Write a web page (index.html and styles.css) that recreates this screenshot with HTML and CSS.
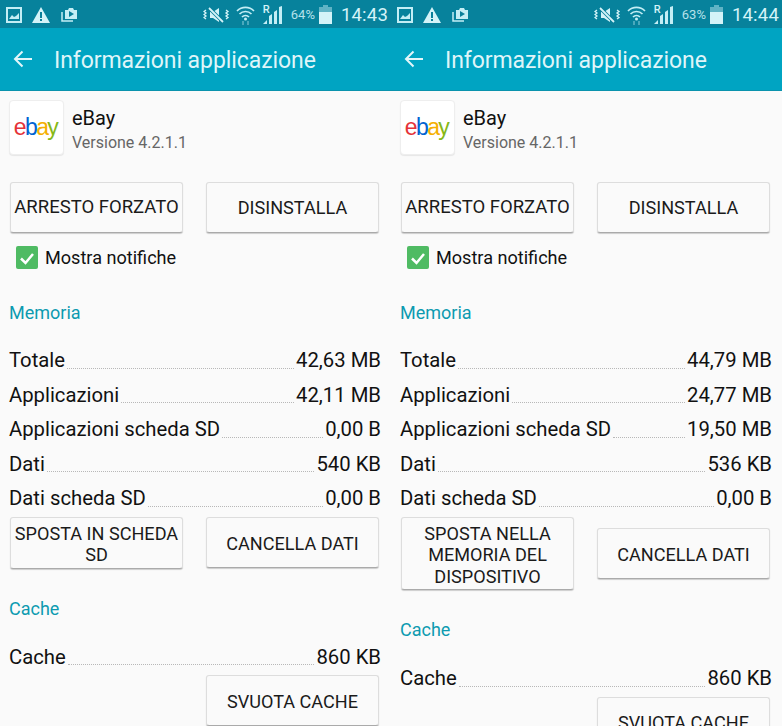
FILE: index.html
```html
<!DOCTYPE html>
<html lang="it">
<head>
<meta charset="utf-8">
<title>Informazioni applicazione</title>
<link rel="stylesheet" href="styles.css">
</head>
<body>
<div class="screens">
  <section class="phone">
    <header class="status">
      <svg class="ico" width="16" height="16" viewBox="0 0 16 16"><path d="M1 1h14v14H1z" fill="none" stroke="#c4eef5" stroke-width="2"/><path d="M3 12l3-4 2 2 2-1 3-3v6z" fill="#c4eef5"/></svg>
      <svg class="ico warn" width="18" height="16" viewBox="0 0 18 16"><path d="M9 0l9 16H0z" fill="#d4f3f8"/><path d="M8 5h2v6H8zM8 12h2v2H8z" fill="#0a7f99"/></svg>
      <svg class="ico shot" width="17" height="15" viewBox="0 0 17 15"><path d="M1 5v9h11" fill="none" stroke="#c4eef5" stroke-width="1.500"/><path d="M4 3h3l1-2h4l1 2h3v9H4z" fill="#c4eef5"/><path d="M8 4l5 3-5 3z" fill="#0a7f99"/></svg>
      <span class="spacer"></span>
      <svg class="ico mute" width="27" height="16" viewBox="0 0 27 16"><path d="M7 5h3l6-4v14l-6-4H7z" fill="#d4f3f8"/><path d="M6 1l14 14" stroke="#0a7f99" stroke-width="3.500"/><path d="M6 1l14 14" stroke="#d4f3f8" stroke-width="1.800"/><path d="M3 3l-2 1.500 2 1.500-2 1.500 2 1.500-2 1.500 2 1.500M23 3l2 1.500-2 1.500 2 1.500-2 1.500 2 1.500-2 1.500" fill="none" stroke="#d4f3f8" stroke-width="1.300"/></svg>
      <svg class="ico wifi" width="19" height="20" viewBox="0 0 19 20"><path d="M1 6a12 12 0 0 1 17 0M3.500 9a8.500 8.500 0 0 1 12 0M6 12a5 5 0 0 1 7 0" fill="none" stroke="#c4eef5" stroke-width="1.700"/><circle cx="9.500" cy="14" r="1.500" fill="#c4eef5"/><path d="M7 16v4M12 16v4" stroke="#62b5c6" stroke-width="1.500"/></svg>
      <span class="net"><span class="roam">R</span><svg width="19" height="18" viewBox="0 0 19 18"><path d="M0 18l4-4v4zM6 18v-8l3-2v10zM11 18V6l3-2v14zM16 18V1l3-1v18z" fill="#c4eef5"/></svg></span>
      <span class="pct">64%</span>
      <svg class="ico batt" width="13" height="19" viewBox="0 0 13 19"><path d="M4 0h5v2h4v17H0V2h4z" fill="#5fb3c5"/><path d="M0 7h13v12H0z" fill="#d4f3f8"/></svg>
      <span class="clock">14:43</span>
    </header>
    <div class="bar">
      <svg class="back" width="20" height="18" viewBox="0 0 20 18"><path d="M19 9H2M9.500 1.500L2 9l7.500 7.500" fill="none" stroke="#e3f6fa" stroke-width="2"/></svg>
      <h1 class="bar-title">Informazioni applicazione</h1>
    </div>
    <main class="content">
      <div class="app">
        <div class="app-icon"><span class="logo"><span class="l-e">e</span><span class="l-b">b</span><span class="l-a">a</span><span class="l-y">y</span></span></div>
        <div class="app-text">
          <div class="app-name">eBay</div>
          <div class="app-ver">Versione 4.2.1.1</div>
        </div>
      </div>
      <div class="btns top-btns">
        <button class="btn tight">ARRESTO FORZATO</button>
        <button class="btn">DISINSTALLA</button>
      </div>
      <label class="notify"><span class="check"><svg width="22" height="22" viewBox="0 0 22 22"><path d="M5 11.500l4.500 4.500L17 7" fill="none" stroke="#fff" stroke-width="2.500"/></svg></span>Mostra notifiche</label>
      <h2 class="section mem">Memoria</h2>
      <div class="rows">
        <div class="row"><span>Totale</span><i class="dots"></i><span>42,63 MB</span></div>
        <div class="row"><span>Applicazioni</span><i class="dots"></i><span>42,11 MB</span></div>
        <div class="row"><span>Applicazioni scheda SD</span><i class="dots"></i><span>0,00 B</span></div>
        <div class="row"><span>Dati</span><i class="dots"></i><span>540 KB</span></div>
        <div class="row"><span>Dati scheda SD</span><i class="dots"></i><span>0,00 B</span></div>
      </div>
      <div class="btns mid-btns">
        <button class="btn multi">SPOSTA IN SCHEDA SD</button>
        <button class="btn">CANCELLA DATI</button>
      </div>
      <h2 class="section cache">Cache</h2>
      <div class="row cache-row"><span>Cache</span><i class="dots"></i><span>860 KB</span></div>
      <div class="btns end-btns"><button class="btn">SVUOTA CACHE</button></div>
    </main>
  </section>
  <section class="phone">
    <header class="status">
      <svg class="ico" width="16" height="16" viewBox="0 0 16 16"><path d="M1 1h14v14H1z" fill="none" stroke="#c4eef5" stroke-width="2"/><path d="M3 12l3-4 2 2 2-1 3-3v6z" fill="#c4eef5"/></svg>
      <svg class="ico warn" width="18" height="16" viewBox="0 0 18 16"><path d="M9 0l9 16H0z" fill="#d4f3f8"/><path d="M8 5h2v6H8zM8 12h2v2H8z" fill="#0a7f99"/></svg>
      <svg class="ico shot" width="17" height="15" viewBox="0 0 17 15"><path d="M1 5v9h11" fill="none" stroke="#c4eef5" stroke-width="1.500"/><path d="M4 3h3l1-2h4l1 2h3v9H4z" fill="#c4eef5"/><path d="M8 4l5 3-5 3z" fill="#0a7f99"/></svg>
      <span class="spacer"></span>
      <svg class="ico mute" width="27" height="16" viewBox="0 0 27 16"><path d="M7 5h3l6-4v14l-6-4H7z" fill="#d4f3f8"/><path d="M6 1l14 14" stroke="#0a7f99" stroke-width="3.500"/><path d="M6 1l14 14" stroke="#d4f3f8" stroke-width="1.800"/><path d="M3 3l-2 1.500 2 1.500-2 1.500 2 1.500-2 1.500 2 1.500M23 3l2 1.500-2 1.500 2 1.500-2 1.500 2 1.500-2 1.500" fill="none" stroke="#d4f3f8" stroke-width="1.300"/></svg>
      <svg class="ico wifi" width="19" height="20" viewBox="0 0 19 20"><path d="M1 6a12 12 0 0 1 17 0M3.500 9a8.500 8.500 0 0 1 12 0M6 12a5 5 0 0 1 7 0" fill="none" stroke="#c4eef5" stroke-width="1.700"/><circle cx="9.500" cy="14" r="1.500" fill="#c4eef5"/><path d="M7 16v4M12 16v4" stroke="#62b5c6" stroke-width="1.500"/></svg>
      <span class="net"><span class="roam">R</span><svg width="19" height="18" viewBox="0 0 19 18"><path d="M0 18l4-4v4zM6 18v-8l3-2v10zM11 18V6l3-2v14zM16 18V1l3-1v18z" fill="#c4eef5"/></svg></span>
      <span class="pct">63%</span>
      <svg class="ico batt" width="13" height="19" viewBox="0 0 13 19"><path d="M4 0h5v2h4v17H0V2h4z" fill="#5fb3c5"/><path d="M0 7h13v12H0z" fill="#d4f3f8"/></svg>
      <span class="clock">14:44</span>
    </header>
    <div class="bar">
      <svg class="back" width="20" height="18" viewBox="0 0 20 18"><path d="M19 9H2M9.500 1.500L2 9l7.500 7.500" fill="none" stroke="#e3f6fa" stroke-width="2"/></svg>
      <h1 class="bar-title">Informazioni applicazione</h1>
    </div>
    <main class="content">
      <div class="app">
        <div class="app-icon"><span class="logo"><span class="l-e">e</span><span class="l-b">b</span><span class="l-a">a</span><span class="l-y">y</span></span></div>
        <div class="app-text">
          <div class="app-name">eBay</div>
          <div class="app-ver">Versione 4.2.1.1</div>
        </div>
      </div>
      <div class="btns top-btns">
        <button class="btn tight">ARRESTO FORZATO</button>
        <button class="btn">DISINSTALLA</button>
      </div>
      <label class="notify"><span class="check"><svg width="22" height="22" viewBox="0 0 22 22"><path d="M5 11.500l4.500 4.500L17 7" fill="none" stroke="#fff" stroke-width="2.500"/></svg></span>Mostra notifiche</label>
      <h2 class="section mem">Memoria</h2>
      <div class="rows">
        <div class="row"><span>Totale</span><i class="dots"></i><span>44,79 MB</span></div>
        <div class="row"><span>Applicazioni</span><i class="dots"></i><span>24,77 MB</span></div>
        <div class="row"><span>Applicazioni scheda SD</span><i class="dots"></i><span>19,50 MB</span></div>
        <div class="row"><span>Dati</span><i class="dots"></i><span>536 KB</span></div>
        <div class="row"><span>Dati scheda SD</span><i class="dots"></i><span>0,00 B</span></div>
      </div>
      <div class="btns mid-btns">
        <button class="btn multi">SPOSTA NELLA MEMORIA DEL DISPOSITIVO</button>
        <button class="btn">CANCELLA DATI</button>
      </div>
      <h2 class="section cache">Cache</h2>
      <div class="row cache-row"><span>Cache</span><i class="dots"></i><span>860 KB</span></div>
      <div class="btns end-btns"><button class="btn">SVUOTA CACHE</button></div>
    </main>
  </section>
</div>
</body>
</html>
```
FILE: styles.css
```css
* { box-sizing: border-box; }
html, body { margin: 0; padding: 0; height: 726px; overflow: hidden; background: #fafafa; }
body { font-family: Roboto, "Liberation Sans", sans-serif; color: #111; }
.screens { display: grid; grid-template-columns: 391px 391px; height: 726px; overflow: hidden; }
.phone { height: 726px; overflow: hidden; display: flex; flex-direction: column; background: #fafafa; }

.status { height: 28px; flex: none; display: flex; align-items: center; padding: 1px 3px 0 6px; background: #07829c; color: #d4f3f8; }
.ico { flex: none; display: block; }
.warn { margin-left: 10px; margin-top: 1px; }
.shot { margin-left: 11px; }
.spacer { flex: 1; }
.mute { margin-right: 6px; }
.wifi { margin-right: 8px; margin-top: 1px; }
.net { display: flex; align-items: flex-end; position: relative; width: 19px; height: 19px; margin-right: 9px; justify-content: flex-end; }
.roam { position: absolute; left: 0; top: -2px; font-size: 11px; font-weight: 500; }
.pct { font-size: 13px; margin-right: 4px; opacity: .85; }
.batt { margin-right: 9px; }
.clock { font-size: 18.500px; letter-spacing: .2px; }

.bar { height: 63px; flex: none; display: flex; align-items: center; padding: 3px 0 0 13px; background: #00a4c2; border-bottom: 1px solid #0a93ad; }
.back { flex: none; margin-top: -3px; }
.bar-title { margin: 0 0 0 21px; font-size: 23px; font-weight: 400; color: #dff5f9; letter-spacing: -.08px; white-space: nowrap; }

.content { flex: 1; padding: 0 10px 0 9px; }

.app { display: flex; align-items: center; margin-top: 9px; }
.app-icon { width: 55px; height: 55px; flex: none; display: flex; align-items: center; justify-content: center; background: #fff; border: 1px solid #eee; border-radius: 4px; box-shadow: 0 1px 1px rgba(0,0,0,.08); }
.logo { font-family: "Liberation Sans", sans-serif; font-size: 23px; letter-spacing: -1.6px; line-height: 1; padding-right: 2px; }
.l-e { color: #e53238; }
.l-b { color: #0064d2; }
.l-a { color: #f5af02; }
.l-y { color: #86b817; }
.app-text { margin-left: 8px; padding-top: 4px; }
.app-name { font-size: 20px; line-height: 26px; color: #111; }
.app-ver { font-size: 16px; line-height: 22px; color: #666; margin-top: 1px; }

.btns { display: flex; align-items: center; gap: 23px; padding-left: 1px; }
.top-btns { margin-top: 27px; }
.mid-btns { margin-top: 1px; }
.end-btns { justify-content: flex-end; margin-top: 1px; padding-right: 2px; }
.btn { width: 173px; height: 51px; flex: none; padding: 2px 2px 0; border: 1px solid #ddd; border-bottom-color: #aaa; border-radius: 3px; background: #fafafa; box-shadow: 0 1px 1px rgba(0,0,0,.18); font-family: inherit; font-size: 18.100px; line-height: 21.500px; color: #1a1a1a; text-align: center; }
.top-btns .btn { padding-top: 0; }
.top-btns .tight { padding: 0; white-space: nowrap; font-size: 18.500px; }
.multi { height: auto; min-height: 52px; padding: 5px 2px 2px; }

.notify { display: flex; align-items: center; height: 25px; margin: 12px 0 0 7px; font-size: 18.100px; color: #111; }
.check { width: 22px; height: 23px; margin-right: 7px; background: #4fbb63; border-radius: 2px; display: flex; align-items: center; justify-content: center; }
.check svg { display: block; }

.section { margin: 0; font-size: 18px; font-weight: 400; line-height: 24px; color: #0d9ab0; }
.mem { margin-top: 31px; }
.cache { margin-top: 28px; }

.rows { margin-top: 18px; }
.row { display: flex; align-items: flex-end; height: 34.500px; font-size: 20.300px; line-height: 34.500px; color: #111; white-space: nowrap; }
.dots { flex: 1; height: 1px; margin: 0 2px 9px 2px; border-bottom: 1px dotted #b8b8b8; }
.cache-row { margin-top: 19px; }
```
